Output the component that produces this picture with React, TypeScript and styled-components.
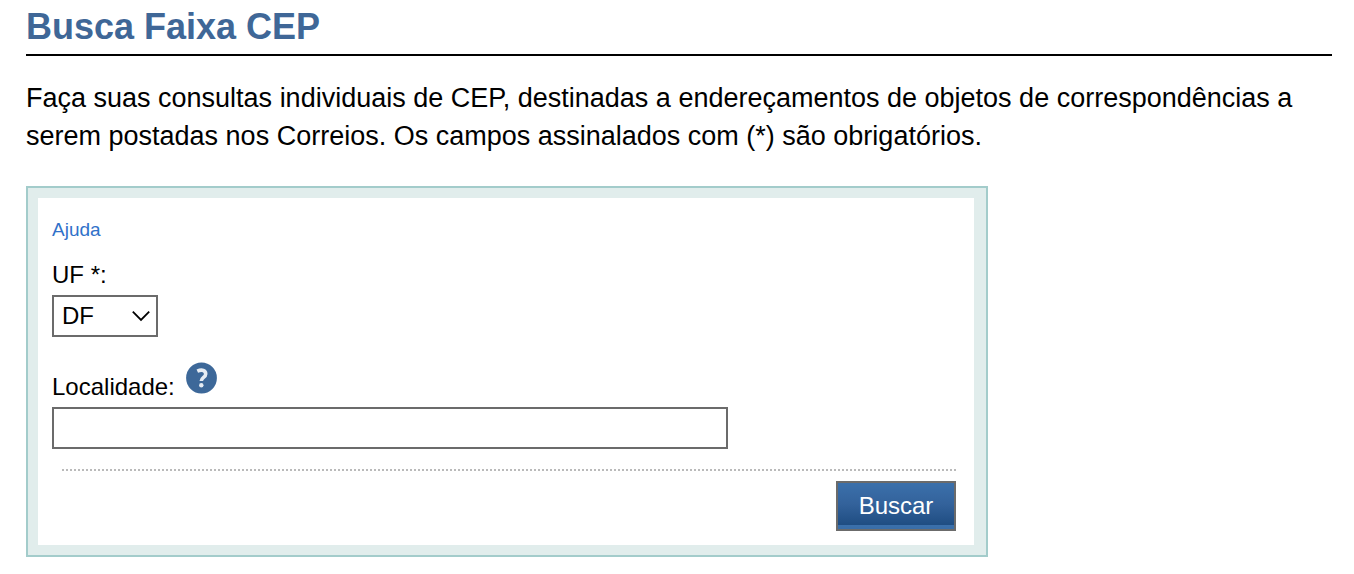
import React from "react";
import styled, { createGlobalStyle } from "styled-components";

const GlobalStyle = createGlobalStyle`
  *, *::before, *::after { box-sizing: border-box; }
  body {
    margin: 0;
    background: #fff;
    color: #000;
    font-family: "Liberation Sans", Arial, Helvetica, sans-serif;
    font-size: 24px;
  }
`;

const Page = styled.main`
  padding: 6px 22px 16px 26px;
`;

const Title = styled.h1`
  margin: 0;
  padding-bottom: 6px;
  border-bottom: 2px solid #000;
  color: #3f6797;
  font-size: 36px;
  line-height: 42px;
`;

const Intro = styled.p`
  margin: 23px 0 31px;
  font-size: 27px;
  line-height: 38px;
`;

const Panel = styled.form`
  max-width: 962px;
  padding: 10px 12px 10px 10px;
  border: 2px solid #a3cccb;
  background: #e1edec;
`;

const PanelBody = styled.div`
  display: flex;
  flex-direction: column;
  align-items: flex-start;
  padding: 21px 18px 14px 14px;
  background: #fff;
`;

const HelpLink = styled.a`
  margin-bottom: 20px;
  color: #3071c9;
  font-size: 19px;
  line-height: 22px;
  text-decoration: none;
`;

const Field = styled.div<{ $gap?: number }>`
  display: flex;
  flex-direction: column;
  align-items: flex-start;
  gap: 6px;
  width: 100%;
  margin-bottom: ${(p) => p.$gap ?? 0}px;
`;

const LabelRow = styled.div`
  display: flex;
  align-items: flex-end;
  gap: 11px;
`;

const Label = styled.label`
  font-size: 24px;
  line-height: 28px;
`;

const HelpButton = styled.button`
  display: flex;
  margin: 0 0 7px;
  padding: 0;
  border: 0;
  background: none;
  cursor: pointer;
`;

const SelectBox = styled.div`
  display: grid;
  align-items: center;
  width: 106px;

  > * { grid-area: 1 / 1; }
  > svg { justify-self: end; margin-right: 8px; pointer-events: none; }
`;

const Select = styled.select`
  appearance: none;
  width: 100%;
  height: 42px;
  padding: 0 30px 2px 8px;
  border: 2px solid #6b6b6b;
  border-radius: 0;
  background: #fff;
  color: #000;
  font: inherit;
`;

const TextInput = styled.input`
  width: 100%;
  max-width: 676px;
  height: 42px;
  padding: 0 8px;
  border: 2px solid #6b6b6b;
  border-radius: 0;
  background: #fff;
  font: inherit;
`;

const Actions = styled.div`
  display: flex;
  justify-content: flex-end;
  align-self: stretch;
  margin: 20px 0 0 10px;
  padding-top: 10px;
  border-top: 2px dotted #bababa;
`;

const SubmitButton = styled.button`
  width: 120px;
  height: 50px;
  padding: 0;
  border: 2px solid #6b6b6b;
  background: linear-gradient(#3b70ab, #33629b 50%, #1f4d82) 0 0 / 100% 42px repeat-y;
  color: #fff;
  font: inherit;
  cursor: pointer;
`;

const Chevron = () => (
  <svg width="18" height="12" viewBox="0 0 18 12" fill="none" aria-hidden="true">
    <path d="M.8 1.7 9 10l8.2-8.3" stroke="#000" strokeWidth="1.8" />
  </svg>
);

const QuestionIcon = () => (
  <svg width="31" height="32" viewBox="0 0 31 32" aria-hidden="true">
    <circle cx="15.5" cy="16" r="15.4" fill="#3d6899" />
    <path
      d="M11.3 9.2c4.9-2.2 8.4-.7 8.4 2.7 0 3.6-4.4 3.4-4.4 7.2"
      fill="none"
      stroke="#e6ecf3"
      strokeWidth="3.6"
    />
    <circle cx="15.3" cy="23.2" r="2.2" fill="#e6ecf3" />
  </svg>
);

const STATES = [
  "AC", "AL", "AM", "AP", "BA", "CE", "DF", "ES", "GO", "MA", "MG", "MS", "MT", "PA",
  "PB", "PE", "PI", "PR", "RJ", "RN", "RO", "RR", "RS", "SC", "SE", "SP", "TO",
];

export default function App() {
  return (
    <>
      <GlobalStyle />
      <Page>
        <Title>Busca Faixa CEP</Title>
        <Intro>
          Faça suas consultas individuais de CEP, destinadas a endereçamentos de objetos de
          correspondências a serem postadas nos Correios. Os campos assinalados com (*) são
          obrigatórios.
        </Intro>
        <Panel onSubmit={(e) => e.preventDefault()}>
          <PanelBody>
            <HelpLink href="#ajuda">Ajuda</HelpLink>
            <Field $gap={25}>
              <Label htmlFor="uf">UF *:</Label>
              <SelectBox>
                <Select id="uf" defaultValue="DF">
                  {STATES.map((s) => (
                    <option key={s}>{s}</option>
                  ))}
                </Select>
                <Chevron />
              </SelectBox>
            </Field>
            <Field>
              <LabelRow>
                <Label htmlFor="localidade">Localidade:</Label>
                <HelpButton type="button" aria-label="Ajuda sobre localidade">
                  <QuestionIcon />
                </HelpButton>
              </LabelRow>
              <TextInput id="localidade" type="text" />
            </Field>
            <Actions>
              <SubmitButton type="submit">Buscar</SubmitButton>
            </Actions>
          </PanelBody>
        </Panel>
      </Page>
    </>
  );
}
